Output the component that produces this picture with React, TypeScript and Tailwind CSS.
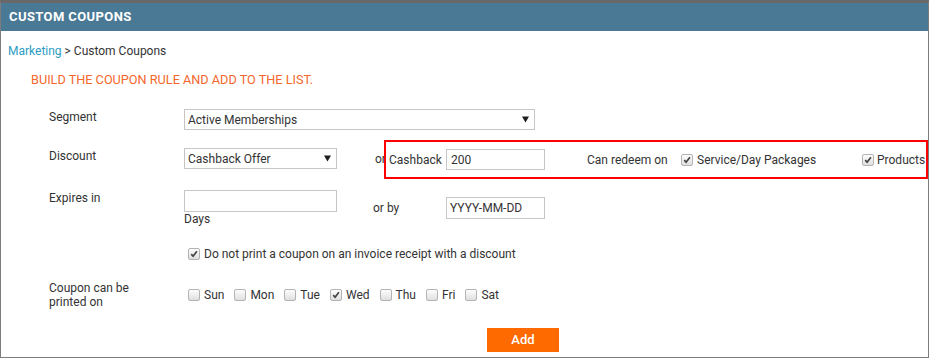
import React from 'react';

const days = [
  { label: 'Sun', checked: false },
  { label: 'Mon', checked: false },
  { label: 'Tue', checked: false },
  { label: 'Wed', checked: true },
  { label: 'Thu', checked: false },
  { label: 'Fri', checked: false },
  { label: 'Sat', checked: false },
];

function Box({ checked }: { checked?: boolean }) {
  return (
    <span className="inline-flex h-[12px] w-[12px] shrink-0 items-center justify-center rounded-[2px] border border-[#b3b3b3] bg-linear-to-b from-[#fdfdfd] to-[#dfdfdf]">
      {checked && (
        <svg width="8" height="8" viewBox="0 0 8 8">
          <path d="M1.2 4.2 L3.1 6.2 L6.9 1.3" stroke="#444" strokeWidth="1.7" fill="none" />
        </svg>
      )}
    </span>
  );
}

function Check({ label, checked, className = '', gap = 'mr-[4px]' }: { label: string; checked?: boolean; className?: string; gap?: string }) {
  return (
    <span className={`flex items-center whitespace-nowrap ${className}`}>
      <span className={`ml-[4px] flex ${gap}`}>
        <Box checked={checked} />
      </span>
      {label}
    </span>
  );
}

function Select({ value, width }: { value: string; width: string }) {
  return (
    <div className={`flex h-[21px] shrink-0 items-center justify-between border border-[#c6c6c6] bg-white pl-[3px] pr-[5px] ${width}`}>
      <span>{value}</span>
      <svg width="7" height="7" viewBox="0 0 7 7">
        <polygon points="0,0.5 7,0.5 3.5,6.5" fill="#1e1e1e" />
      </svg>
    </div>
  );
}

export default function App() {
  return (
    <div className="h-[358px] w-[929px] overflow-hidden border border-t-[3px] border-[#7c7c7c] border-t-[#686868] bg-white font-['Roboto','Liberation_Sans',sans-serif] text-[12px] leading-[16px] text-[#333]">
      <div className="flex h-[28px] items-center bg-[#4a7995] pl-[8px] text-[13px] font-bold tracking-[0.4px] text-white">
        CUSTOM COUPONS
      </div>

      <div className="mt-[12px] pl-[7px]">
        <span className="text-[#2b9dc3]">Marketing</span> &gt; Custom Coupons
      </div>

      <div className="mt-[13px] pl-[30px] text-[12.7px] text-[#f4672c]">BUILD THE COUPON RULE AND ADD TO THE LIST.</div>

      <div className="pl-[48px]">
        {/* segment */}
        <div className="mt-[21px] flex items-start">
          <div className="w-[135px] shrink-0">Segment</div>
          <Select value="Active Memberships" width="w-[351px]" />
        </div>

        {/* discount */}
        <div className="mt-[10px] flex items-start">
          <div className="w-[135px] shrink-0 pt-[8px]">Discount</div>
          <div className="mt-[8px]">
            <Select value="Cashback Offer" width="w-[153px]" />
          </div>
          <span className="ml-[38px] mt-[11px] w-[9px] whitespace-nowrap">or</span>
          <div className="flex h-[39px] w-[544px] shrink-0 items-center border-2 border-[#ff0000] pl-[3px]">
            <span className="w-[57px] shrink-0">Cashback</span>
            <div className="flex h-[21px] w-[99px] shrink-0 items-center border border-[#c6c6c6] pl-[4px]">200</div>
            <span className="ml-[42px] w-[90px] shrink-0 whitespace-nowrap">Can redeem on</span>
            <Check label="Service/Day Packages" checked className="w-[181px] shrink-0" />
            <Check label="Products" checked gap="mr-[3px]" />
          </div>
        </div>

        {/* expires */}
        <div className="mt-[11px] flex items-start">
          <div className="w-[135px] shrink-0">Expires in</div>
          <div className="w-[153px] shrink-0">
            <div className="h-[22px] border border-[#c6c6c6]" />
            <div className="leading-[14px]">Days</div>
          </div>
          <div className="ml-[36px] mt-[7px] flex items-center">
            <span className="w-[73px]">or by</span>
            <div className="flex h-[22px] w-[99px] items-center border border-[#c6c6c6] pl-[3px]">YYYY-MM-DD</div>
          </div>
        </div>

        {/* no print */}
        <div className="mt-[20px] flex pl-[135px]">
          <Check label="Do not print a coupon on an invoice receipt with a discount" checked />
        </div>

        {/* days */}
        <div className="mt-[19px] flex items-center">
          <div className="w-[135px] shrink-0 leading-[14px]">
            Coupon can be
            <br />
            printed on
          </div>
          <div className="flex items-center">
            {days.map(d => (
              <Check key={d.label} label={d.label} checked={d.checked} className="mr-[6px]" />
            ))}
          </div>
        </div>

        <button className="ml-[438px] mt-[19px] flex h-[24px] w-[72px] items-center justify-center bg-[#ff6a00] text-[13px] font-medium text-white">
          Add
        </button>
      </div>
    </div>
  );
}
